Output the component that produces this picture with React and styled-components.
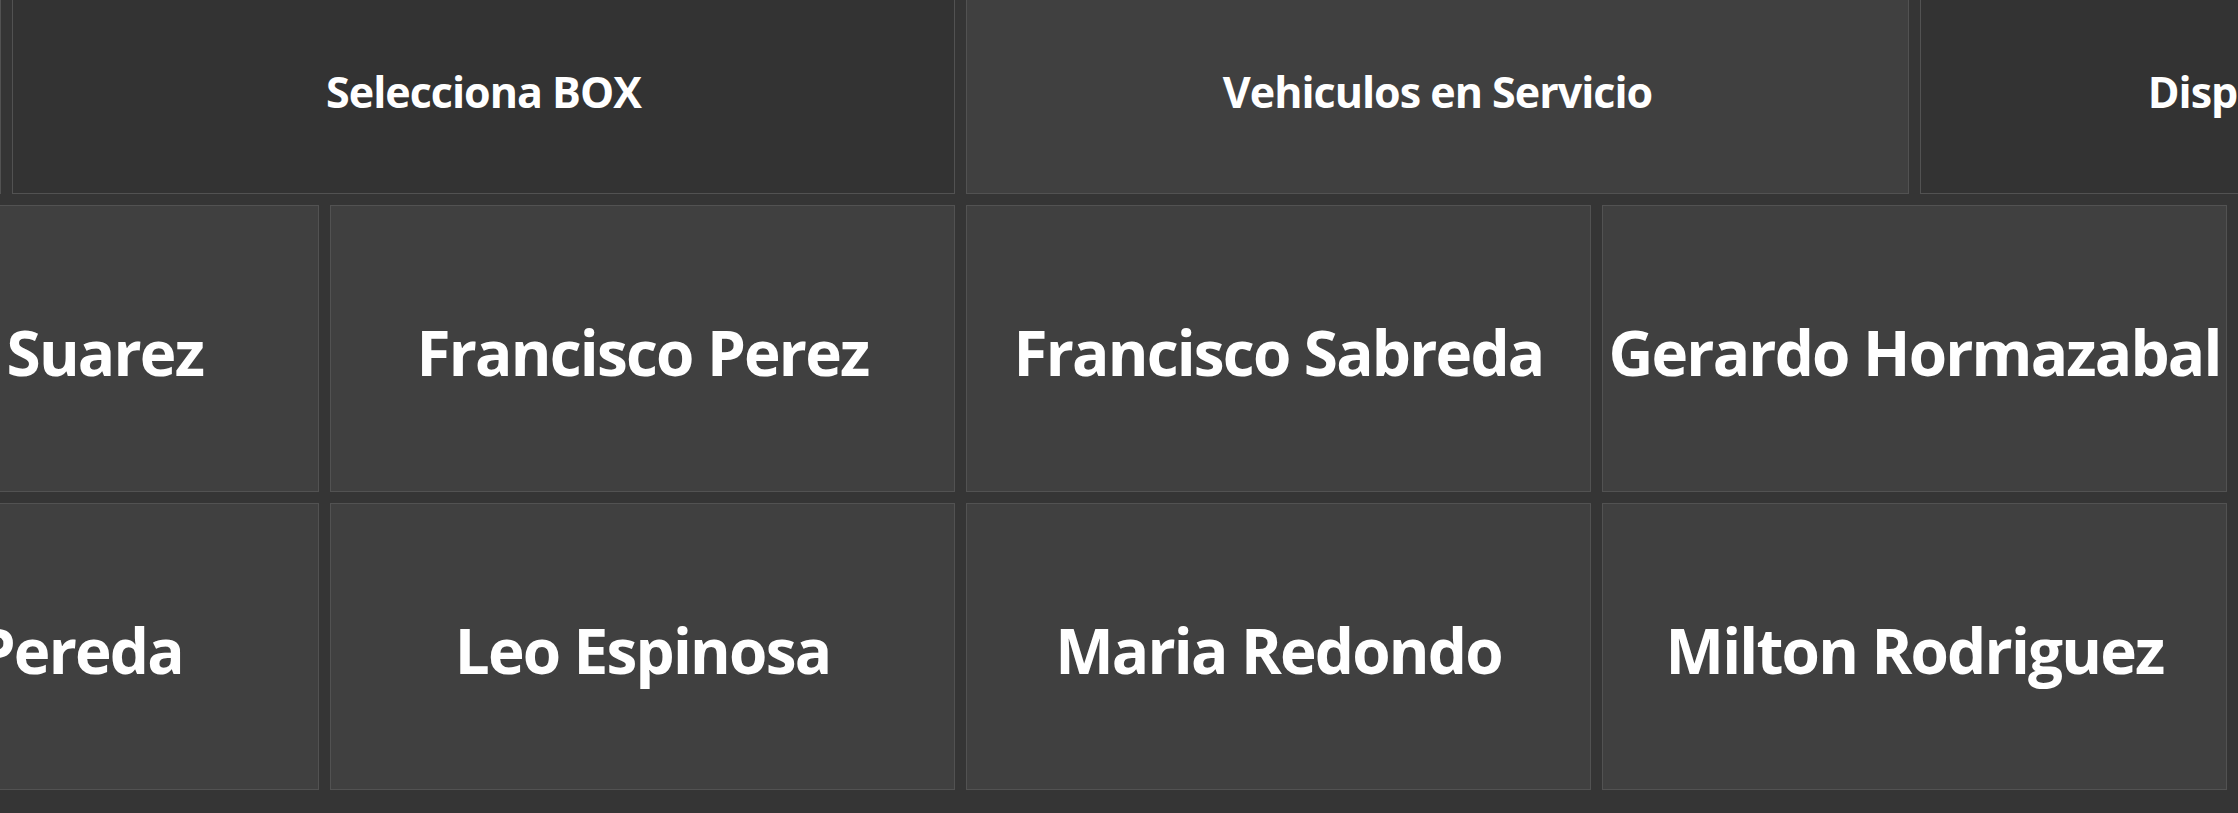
import React, { useLayoutEffect, useRef } from 'react';
import styled, { createGlobalStyle } from 'styled-components';

const GlobalStyle = createGlobalStyle`
  html, body {
    margin: 0;
    padding: 0;
    background: #353535;
    overflow: hidden;
  }
`;

const Viewport = styled.div`
  width: 100vw;
  height: 100vh;
  overflow: hidden;
  background: #353535;
`;

const Board = styled.div`
  display: grid;
  grid-template-columns: repeat(12, 307px);
  grid-template-rows: 206px;
  grid-auto-rows: 287px;
  gap: 11px;
  padding: 11px 11px 60px;
  width: max-content;
  font-family: 'Open Sans', 'Noto Sans', sans-serif;
  color: #fff;
`;

const Tab = styled.div`
  grid-column: span 3;
  display: flex;
  align-items: center;
  justify-content: center;
  background: ${(p) => (p.$active ? '#404040' : '#333333')};
  border: 1px solid #525252;
  font-size: 43px;
  font-weight: 700;
  letter-spacing: -1px;
  white-space: nowrap;
`;

const Mechanic = styled.div`
  grid-column: span 2;
  display: flex;
  align-items: center;
  justify-content: center;
  padding-top: 6px;
  background: #404040;
  border: 1px solid #525252;
  font-size: 62px;
  font-weight: 700;
  letter-spacing: -1.8px;
  white-space: nowrap;
`;

const tabs = [
  { label: 'Ingreso Vehiculo' },
  { label: 'Selecciona BOX' },
  { label: 'Vehiculos en Servicio', active: true },
  { label: 'Disponibilidad de Boxes' },
];

const names = [
  'Andres Molina',
  'Carlos Suarez',
  'Francisco Perez',
  'Francisco Sabreda',
  'Gerardo Hormazabal',
  'Hector Vidal',
  'Ignacio Rojas',
  'Juan Pereda',
  'Leo Espinosa',
  'Maria Redondo',
  'Milton Rodriguez',
  'Nicolas Vera',
];

export default function App() {
  const ref = useRef(null);

  useLayoutEffect(() => {
    if (ref.current) {
      ref.current.scrollLeft = 953;
      ref.current.scrollTop = 23;
    }
  }, []);

  return (
    <>
      <GlobalStyle />
      <Viewport ref={ref}>
        <Board>
          {tabs.map((t) => (
            <Tab key={t.label} $active={t.active}>
              {t.label}
            </Tab>
          ))}
          {names.map((n) => (
            <Mechanic key={n}>{n}</Mechanic>
          ))}
        </Board>
      </Viewport>
    </>
  );
}
